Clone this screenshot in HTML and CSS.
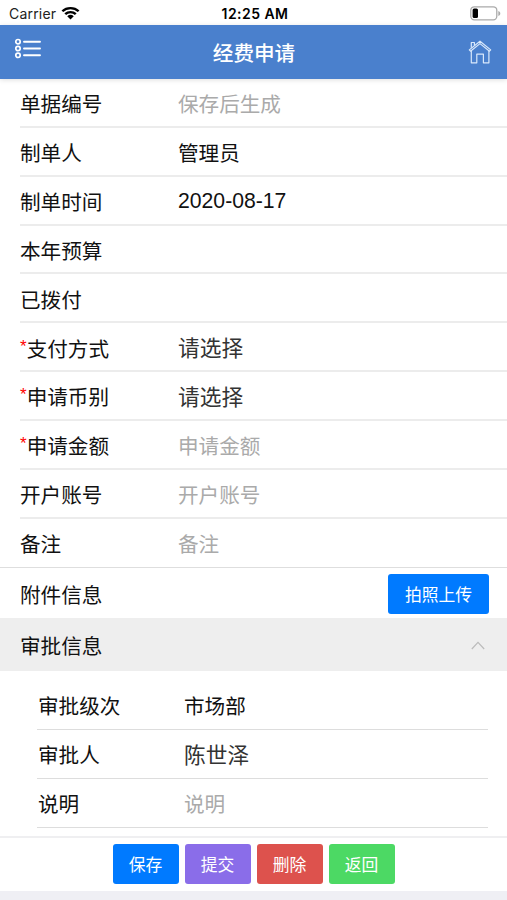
FILE: index.html
```
<!DOCTYPE html>
<html lang="zh-CN">
	<head>
		<meta charset="utf-8">
		<meta name="viewport" content="width=device-width, initial-scale=1">
		<title>经费申请</title>
		<link rel="stylesheet" href="styles.css">
	</head>
	<body>
		<div class="status-bar">
			<div class="status-left">
				<span>Carrier</span>
				<svg class="wifi" viewBox="0 0 18 14" width="19" height="14" preserveAspectRatio="none">
					<path d="M1.300 5.200a11 11 0 0 1 15.400 0M4 8.100a7.200 7.200 0 0 1 10 0" fill="none" stroke="#000" stroke-width="2.300"/>
					<path d="M5.900 10.200a4.500 4.500 0 0 1 6.200 0L9 13.400z"/>
				</svg>
			</div>
			<div class="status-time">12:25 AM</div>
			<div class="status-right">
				<svg viewBox="0 0 31 15" width="31" height="15">
					<rect x=".8" y=".8" width="26" height="13" rx="3.500" fill="#fff" stroke="#aaa" stroke-width="1.300"/>
					<rect x="2.600" y="2.600" width="5.400" height="9.400" rx="1.500"/>
					<path d="M28.300 5v5c1.400-.5 2-1.400 2-2.500s-.6-2-2-2.500z" fill="#aaa"/>
				</svg>
			</div>
		</div>

		<header class="bar-nav">
			<svg class="icon-list" viewBox="0 0 27 21" width="27" height="21" fill="none" stroke="#fff">
				<g stroke-width="1.700">
					<circle cx="4" cy="3.700" r="2.200"/>
					<circle cx="4" cy="10.500" r="2.200"/>
					<circle cx="4" cy="17.300" r="2.200"/>
				</g>
				<path d="M10 3.700h16M10 10.500h16M10 17.300h16" stroke-width="1.900" stroke-linecap="round"/>
			</svg>
			<h1 class="title">经费申请</h1>
			<svg class="icon-home" viewBox="0 0 24 24" width="24" height="24" fill="none" stroke="#d9e8fb" stroke-width="1.200" stroke-linejoin="round">
				<path d="M1.300 9.900 12 1.200l10.700 8.700-1.200 1.300L12 3.600l-9.500 7.600z"/>
				<path d="M3.300 7.700V2.500h3.100v2.800"/>
				<path d="M3.300 11v11.800h5.500v-8.600h6.600v8.600h5.500V11"/>
			</svg>
		</header>

		<main>
			<div class="list">
				<div class="row"><label>单据编号</label><span class="placeholder">保存后生成</span></div>
				<div class="row"><label>制单人</label><span class="value">管理员</span></div>
				<div class="row"><label>制单时间</label><span class="value date">2020-08-17</span></div>
				<div class="row"><label>本年预算</label></div>
				<div class="row"><label>已拨付</label></div>
				<div class="row"><label><i class="required">*</i>支付方式</label><span class="select">请选择</span></div>
				<div class="row"><label><i class="required">*</i>申请币别</label><span class="select">请选择</span></div>
				<div class="row"><label><i class="required">*</i>申请金额</label><span class="placeholder">申请金额</span></div>
				<div class="row"><label>开户账号</label><span class="placeholder">开户账号</span></div>
				<div class="row last"><label>备注</label><span class="placeholder">备注</span></div>
			</div>

			<div class="attach">
				<span>附件信息</span>
				<button class="btn btn-blue btn-upload" type="button">拍照上传</button>
			</div>

			<div class="section-head">
				<span>审批信息</span>
				<svg viewBox="0 0 14 9" width="14" height="9" fill="none" stroke="#bbb" stroke-width="1.200">
					<path d="M.8 8 7 1.300 13.200 8"/>
				</svg>
			</div>

			<div class="list list-approve">
				<div class="row"><label>审批级次</label><span class="value">市场部</span></div>
				<div class="row"><label>审批人</label><span class="select">陈世泽</span></div>
				<div class="row"><label>说明</label><span class="placeholder">说明</span></div>
			</div>
		</main>

		<footer class="bar-tool">
			<button class="btn btn-blue" type="button">保存</button>
			<button class="btn btn-purple" type="button">提交</button>
			<button class="btn btn-red" type="button">删除</button>
			<button class="btn btn-green" type="button">返回</button>
		</footer>
	</body>
</html>
```
FILE: styles.css
```
* {
	box-sizing: border-box;
}

body {
	display: flex;
	flex-direction: column;
	height: 900px;
	margin: 0;
	overflow: hidden;
	background: #efeff4;
	color: #111;
	font-family: "Liberation Sans", "Noto Sans CJK SC", sans-serif;
	font-size: 20.6px;
}

/* status bar */
.status-bar {
	display: grid;
	grid-template-columns: 1fr auto 1fr;
	align-items: center;
	height: 25px;
	padding: 3px 6px 0 9px;
	background: #fff;
	font-family: Inter, "Liberation Sans", sans-serif;
	font-size: 14px;
	line-height: 20px;
	color: #222;
}

.status-left {
	display: flex;
	align-items: center;
	gap: 5px;
	letter-spacing: .2px;
}

.wifi {
	margin-top: -3px;
}

.status-time {
	font-weight: 600;
	letter-spacing: .45px;
	color: #000;
}

.status-right {
	display: flex;
	justify-content: flex-end;
	margin-top: -2px;
}

/* header */
.bar-nav {
	display: flex;
	flex: none;
	align-items: center;
	justify-content: space-between;
	height: 54px;
	padding: 0 15px 0 14px;
	background: #4a80cd;
	box-shadow: 0 1px 5px rgba(0, 0, 0, .13);
	z-index: 1;
}

.icon-list {
	margin-top: -7px;
}

.title {
	margin: 0;
	padding-right: 1px;
	color: #fff;
	font-size: 20.6px;
	font-weight: 500;
}

/* form rows */
main {
	flex: 1;
	background: #fff;
}

.list {
	padding-left: 20px;
	border-bottom: 1px solid #dedede;
}

.row {
	display: flex;
	align-items: center;
	height: 48.85px;
	padding-top: 2px;
	border-bottom: 2px solid #ececec;
}

.row.last {
	border-bottom: 0;
	padding-top: 0;
}

.row label {
	flex: none;
	width: 158px;
}

.required {
	color: #f00;
	font-style: normal;
	font-size: 17px;
	line-height: 1;
	vertical-align: 5px;
}

.placeholder {
	color: #aaa;
}

.date {
	font-size: 21.2px;
}

.select {
	padding-bottom: 2px;
	color: #333;
	font-size: 21.7px;
}

/* attachments */
.attach {
	display: flex;
	align-items: center;
	justify-content: space-between;
	height: 50px;
	padding: 2px 18px 0 20px;
}

.section-head {
	display: flex;
	align-items: center;
	justify-content: space-between;
	height: 53px;
	padding: 1px 22px 0 20px;
	background: #eee;
}

.list-approve {
	margin: 0 19px 0 37px;
	padding: 10px 0 0;
	border-bottom: 0;
}

.list-approve .row {
	padding-top: 0;
	padding-left: 1px;
	border-bottom-width: 1px;
	border-bottom-color: #ddd;
}

.list-approve .row label {
	width: 146px;
}

/* buttons */
.btn {
	width: 66px;
	height: 40px;
	padding: 0;
	border: 0;
	border-radius: 3px;
	color: #fff;
	font-family: inherit;
	font-size: 16.8px;
	font-weight: 400;
}

.btn-upload {
	width: 101px;
}

.btn-blue {
	background: #007aff;
}

.btn-purple {
	background: #8a6de9;
}

.btn-red {
	background: #dd524d;
}

.btn-green {
	background: #4cd964;
}

.bar-tool {
	display: flex;
	flex: none;
	justify-content: center;
	gap: 6px;
	height: 55px;
	margin-bottom: 9px;
	padding-top: 6px;
	border-top: 2px solid #efeff1;
	background: #fff;
}
```
